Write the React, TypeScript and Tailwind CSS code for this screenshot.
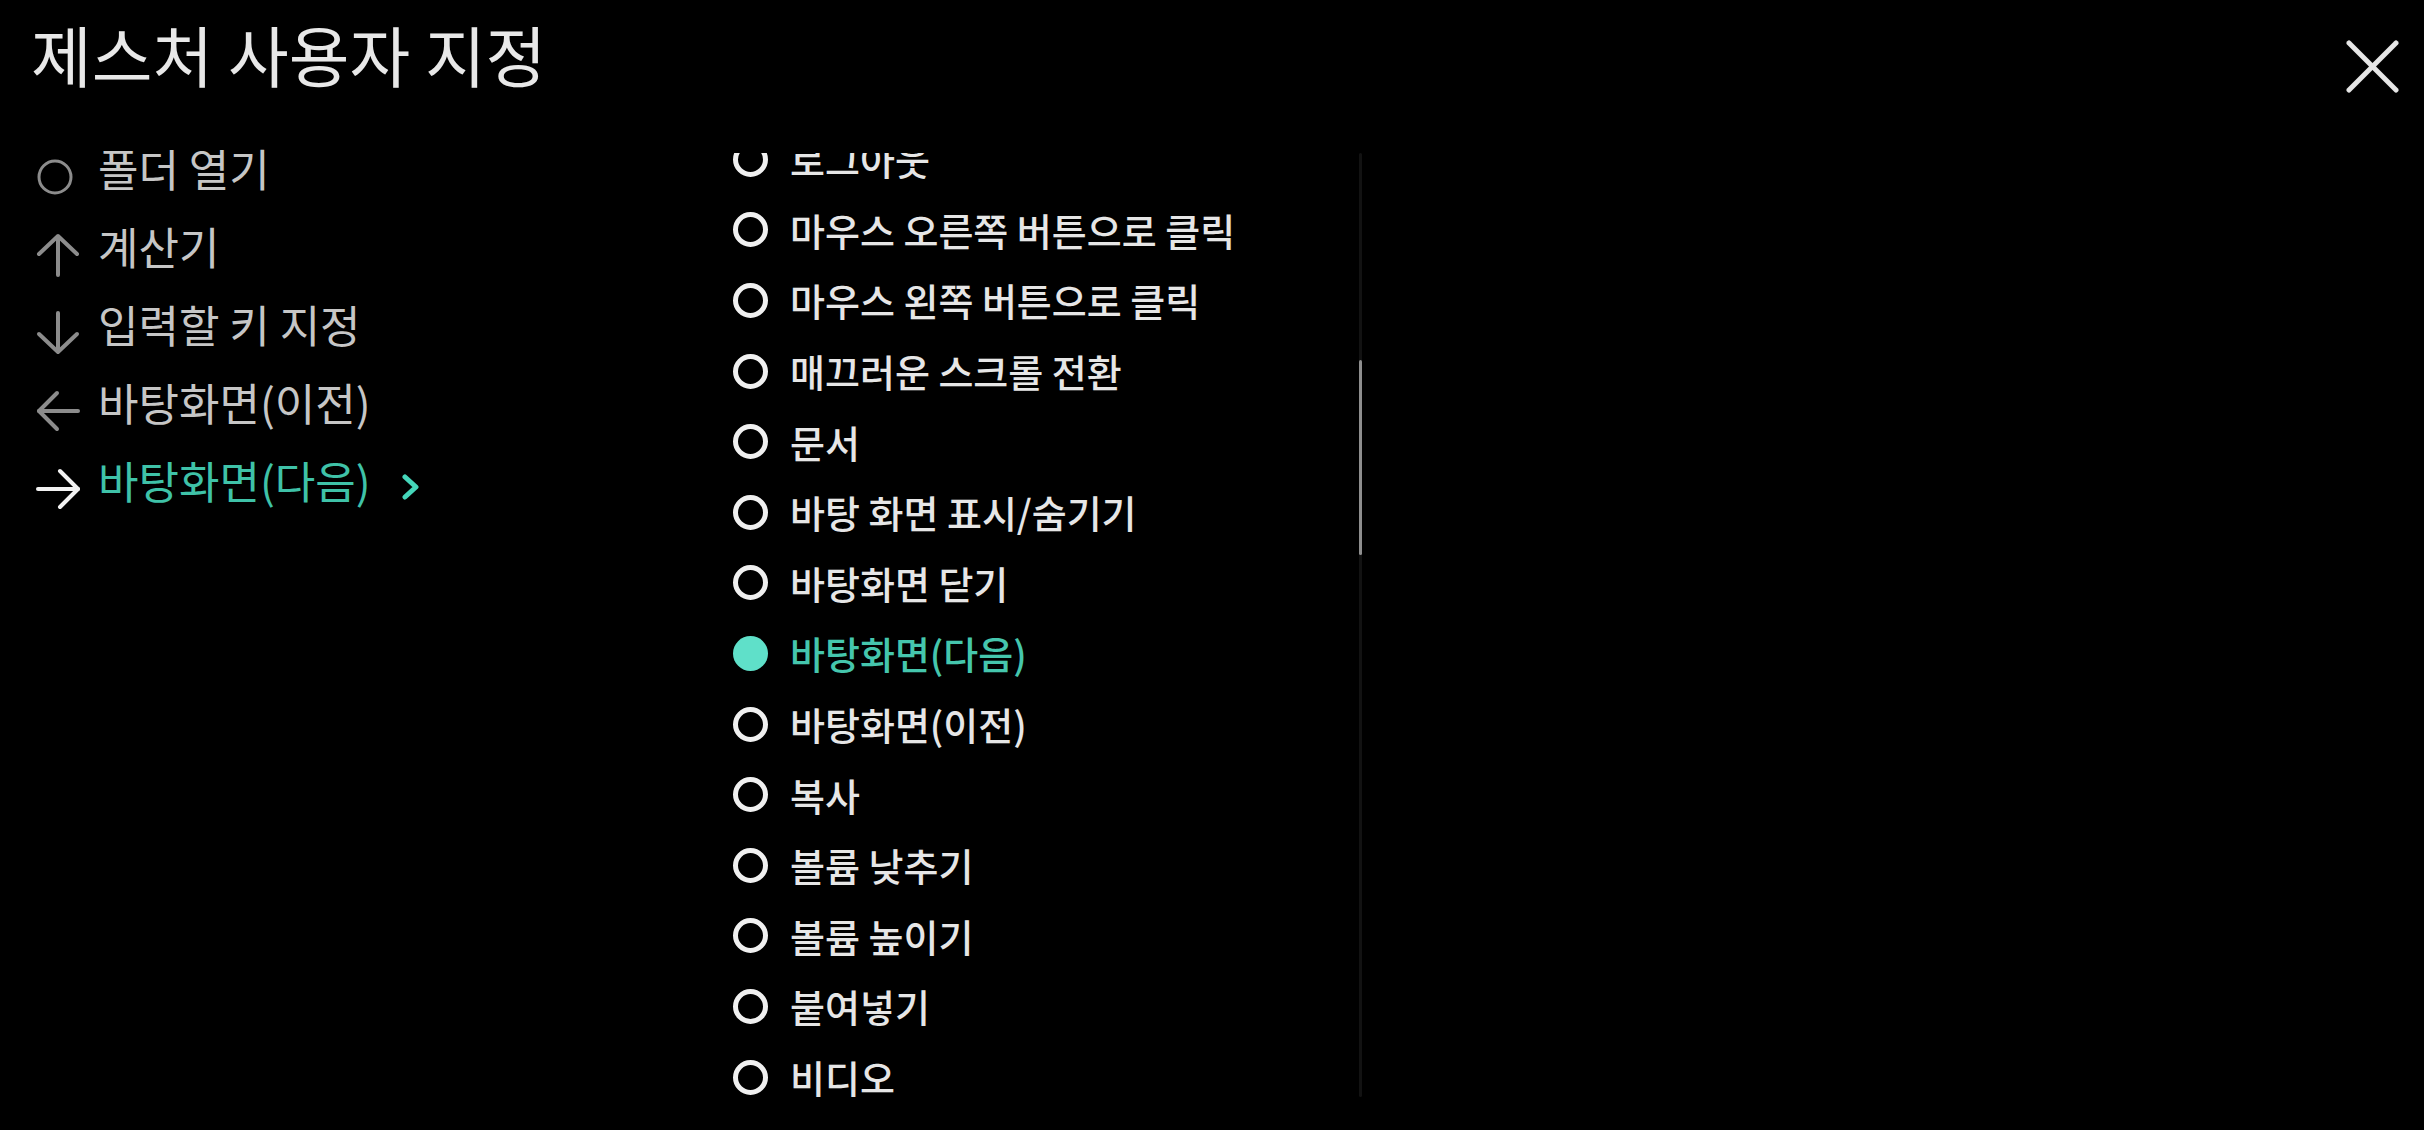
import React from "react";

type LeftKind = "circle" | "up" | "down" | "left" | "right";

const leftItems: { label: string; icon: LeftKind; active?: boolean }[] = [
  { label: "폴더 열기", icon: "circle" },
  { label: "계산기", icon: "up" },
  { label: "입력할 키 지정", icon: "down" },
  { label: "바탕화면(이전)", icon: "left" },
  { label: "바탕화면(다음)", icon: "right", active: true },
];

const rightItems: { label: string; active?: boolean }[] = [
  { label: "로그아웃" },
  { label: "마우스 오른쪽 버튼으로 클릭" },
  { label: "마우스 왼쪽 버튼으로 클릭" },
  { label: "매끄러운 스크롤 전환" },
  { label: "문서" },
  { label: "바탕 화면 표시/숨기기" },
  { label: "바탕화면 닫기" },
  { label: "바탕화면(다음)", active: true },
  { label: "바탕화면(이전)" },
  { label: "복사" },
  { label: "볼륨 낮추기" },
  { label: "볼륨 높이기" },
  { label: "붙여넣기" },
  { label: "비디오" },
];

function LeftIcon({ kind }: { kind: LeftKind }) {
  const gray = "#8c8c8c";
  const white = "#f2f2f2";
  const common = {
    fill: "none",
    strokeWidth: 4,
    strokeLinecap: "round" as const,
    strokeLinejoin: "round" as const,
  };
  return (
    <svg width="44" height="44" viewBox="0 0 44 44" className="shrink-0 mt-[18px]">
      {kind === "circle" && <circle cx="19" cy="22" r="16" stroke={gray} strokeWidth="3" fill="none" />}
      {kind === "up" && (
        <g stroke={gray} {...common}>
          <path d="M22 4 V42" />
          <path d="M3 21 L22 3 L41 21" />
        </g>
      )}
      {kind === "down" && (
        <g stroke={gray} {...common}>
          <path d="M22 2 V40" />
          <path d="M3 23 L22 41 L41 23" />
        </g>
      )}
      {kind === "left" && (
        <g stroke={gray} {...common}>
          <path d="M3 22 H42" />
          <path d="M21 4 L3 22 L21 40" />
        </g>
      )}
      {kind === "right" && (
        <g stroke={white} {...common}>
          <path d="M2 22 H42" />
          <path d="M24 4 L42 22 L24 40" />
        </g>
      )}
    </svg>
  );
}

export default function App() {
  return (
    <div
      className="w-[2424px] h-[1130px] bg-black overflow-hidden flex flex-col"
      style={{ fontFamily: '"Noto Sans CJK KR", "Noto Sans", sans-serif' }}
    >
      {/* Header */}
      <div className="h-[129px] flex items-start justify-between shrink-0">
        <h1 className="pl-[31px] pt-[20px] text-[66px] leading-none font-normal text-[#e8e8e8] whitespace-nowrap">
          제스처 사용자 지정
        </h1>
        <button className="mt-[40px] mr-[25px]" aria-label="닫기">
          <svg width="53" height="53" viewBox="0 0 53 53">
            <g stroke="#e6e6e6" strokeWidth="5" strokeLinecap="round">
              <path d="M3 3 L50 50" />
              <path d="M50 3 L3 50" />
            </g>
          </svg>
        </button>
      </div>

      {/* Body */}
      <div className="flex flex-1 min-h-0">
        {/* Left column */}
        <div className="w-[733px] shrink-0 pl-[36px] flex flex-col">
          {leftItems.map((it) => (
            <div key={it.label} className="h-[78px] flex items-center">
              <LeftIcon kind={it.icon} />
              <span
                className={
                  "ml-[18px] text-[44px] leading-none whitespace-nowrap " +
                  (it.active ? "text-[#3fc2a8]" : "text-[#c6c6c6]")
                }
              >
                {it.label}
              </span>
              {it.active && (
                <svg width="19" height="26" viewBox="0 0 19 26" className="ml-[30px] mt-[14px]">
                  <path
                    d="M4 3 L15 13 L4 23"
                    fill="none"
                    stroke="#45d6ba"
                    strokeWidth="5"
                    strokeLinecap="round"
                    strokeLinejoin="round"
                  />
                </svg>
              )}
            </div>
          ))}
        </div>

        {/* Right list */}
        <div className="w-[626px] shrink-0 mt-[24px] overflow-hidden">
          <div className="-mt-[29px] flex flex-col">
            {rightItems.map((it) => (
              <div key={it.label} className="h-[70.6px] flex items-center shrink-0">
                {it.active ? (
                  <span className="w-[35px] h-[35px] rounded-full bg-[#5fe0c9] shrink-0" />
                ) : (
                  <span className="w-[35px] h-[35px] rounded-full border-[5px] border-[#f0f0f0] shrink-0" />
                )}
                <span
                  className={
                    "ml-[22px] text-[38px] leading-none font-medium whitespace-nowrap " +
                    (it.active ? "text-[#45c6ad]" : "text-[#e6e6e6]")
                  }
                >
                  {it.label}
                </span>
              </div>
            ))}
          </div>
        </div>

        {/* Scrollbar */}
        <div className="w-[3px] h-[944px] mt-[24px] bg-[#121212] rounded-full shrink-0 flex flex-col">
          <div className="mt-[207px] h-[195px] w-[3px] bg-[#8e8e8e] rounded-full" />
        </div>
      </div>
    </div>
  );
}
